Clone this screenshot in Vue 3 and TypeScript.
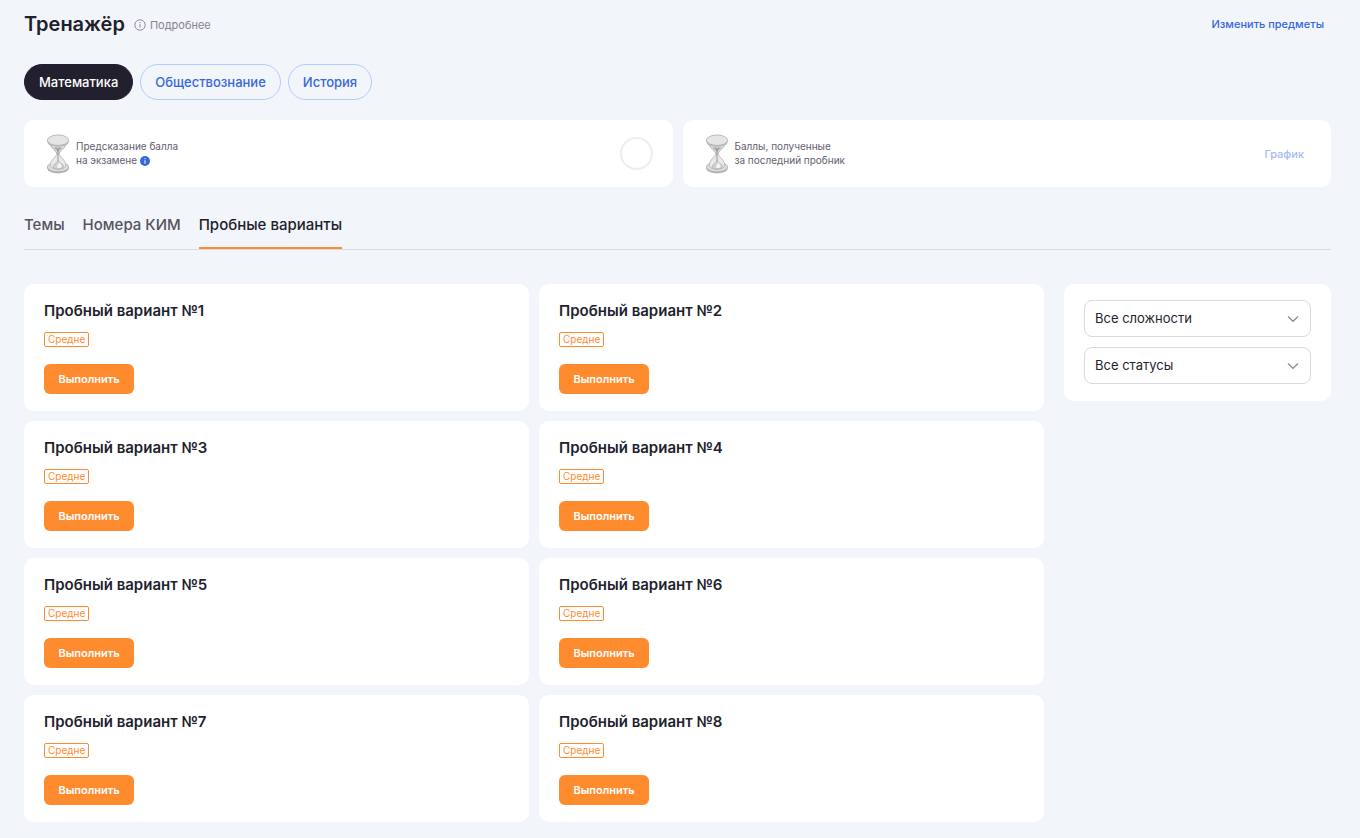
<script setup lang="ts">
import { ref } from 'vue'

interface Variant {
  id: number
  level: string
}

const subjects: string[] = ['Математика', 'Обществознание', 'История']
const activeSubject = ref<string>('Математика')

const tabs: string[] = ['Темы', 'Номера КИМ', 'Пробные варианты']
const activeTab = ref<string>('Пробные варианты')

const stats = [
  { id: 'forecast', lines: ['Предсказание балла', 'на экзамене'] },
  { id: 'last', lines: ['Баллы, полученные', 'за последний пробник'] },
]

const variants: Variant[] = Array.from({ length: 8 }, (_, i) => ({ id: i + 1, level: 'Средне' }))

const filters = [
  { id: 'level', label: 'Сложность', options: ['Все сложности', 'Легко', 'Средне', 'Сложно'] },
  { id: 'status', label: 'Статус', options: ['Все статусы', 'Выполнено', 'Не выполнено'] },
]
</script>

<template>
  <main class="page">
    <header class="top">
      <h1 class="title">Тренажёр</h1>
      <button class="more" type="button">
        <svg class="more-icon" viewBox="0 0 12 12" aria-hidden="true">
          <circle cx="6" cy="6" r="5.2" fill="none" stroke="currentColor" stroke-width="0.9" />
          <path d="M6 5.2V8.6" stroke="currentColor" stroke-width="1" />
          <circle cx="6" cy="3.6" r="0.7" fill="currentColor" />
        </svg>
        Подробнее
      </button>
      <a class="change" href="#subjects">Изменить предметы</a>
    </header>

    <nav class="subjects" aria-label="Предметы">
      <button
        v-for="s in subjects"
        :key="s"
        type="button"
        class="pill"
        :class="{ active: s === activeSubject }"
        @click="activeSubject = s"
      >
        {{ s }}
      </button>
    </nav>

    <section class="stats">
      <article v-for="stat in stats" :key="stat.id" class="stat">
        <svg class="hourglass" viewBox="0 0 24 40" aria-hidden="true">
          <ellipse cx="12" cy="34.4" rx="10.7" ry="5" fill="#b5b5b5" />
          <ellipse cx="12" cy="33" rx="10.6" ry="4.8" fill="#dedede" stroke="#b0b0b0" stroke-width="0.9" />
          <path d="M11 19.5C10.6 23 4.4 25.4 4.2 31.2C4 36.5 20 36.5 19.8 31.2C19.6 25.4 13.4 23 13 19.5Z" fill="#e9e9e9" stroke="#b4b4b4" stroke-width="0.9" />
          <path d="M12 26.5C10.8 29.8 7 30.6 7 32.5C7 36.2 18 36 17.5 32C17.2 30 13.6 29.4 12 26.5Z" fill="#d0d0d0" stroke="#a4a4a4" stroke-width="0.6" />
          <path d="M13 28.5C14.8 30.1 16.2 31.3 15.5 32.8C14.7 34.4 11.7 34.2 10.8 33.3Z" fill="#f5f5f5" />
          <path d="M4.4 10.5C5 15 10.7 16.5 11.1 20H12.9C13.3 16.5 19 15 19.6 10.5Z" fill="#e3e3e3" stroke="#adadad" stroke-width="0.9" />
          <path d="M7.3 13.4C9 15 11.3 16.2 12 19C12.7 16.2 15 15 16.7 13.4Z" fill="#a8a8a8" />
          <path d="M12 16V27" stroke="#929292" stroke-width="0.9" />
          <path d="M1.4 6V8C1.4 14.3 22.6 14.3 22.6 8V6Z" fill="#b8b8b8" />
          <ellipse cx="12" cy="6.2" rx="10.6" ry="5.2" fill="#e5e5e5" stroke="#b3b3b3" stroke-width="0.9" />
        </svg>
        <p class="stat-text">
          {{ stat.lines[0] }}<br />{{ stat.lines[1] }}
          <svg v-if="stat.id === 'forecast'" class="info" viewBox="0 0 10 10" aria-hidden="true">
            <circle cx="5" cy="5" r="5" fill="#3668dc" />
            <path d="M5 4.2V7.7" stroke="#ffffff" stroke-width="1" />
            <circle cx="5" cy="2.7" r="0.6" fill="#ffffff" />
          </svg>
        </p>
        <span v-if="stat.id === 'forecast'" class="ring"></span>
        <button v-else class="chart" type="button">График</button>
      </article>
    </section>

    <nav class="tabs" aria-label="Разделы">
      <button
        v-for="t in tabs"
        :key="t"
        type="button"
        class="tab"
        :class="{ active: t === activeTab }"
        @click="activeTab = t"
      >
        {{ t }}
      </button>
    </nav>

    <div class="content">
      <section class="grid">
        <article v-for="v in variants" :key="v.id" class="card">
          <h2 class="card-title">Пробный вариант №{{ v.id }}</h2>
          <span class="badge">{{ v.level }}</span>
          <button class="run" type="button">Выполнить</button>
        </article>
      </section>

      <aside class="filters">
        <div v-for="f in filters" :key="f.id" class="field">
          <select :id="f.id" class="select" :aria-label="f.label">
            <option v-for="o in f.options" :key="o">{{ o }}</option>
          </select>
          <svg class="chevron" viewBox="0 0 12 8" aria-hidden="true">
            <path d="M1 1.5L6 6.3L11 1.5" fill="none" stroke="#8f8d9c" stroke-width="1.3" />
          </svg>
        </div>
      </aside>
    </div>
  </main>
</template>

<style>
body {
  margin: 0;
  background: #f2f5fa;
}
</style>

<style scoped>
.page {
  box-sizing: border-box;
  padding: 8px 29px 16px 24px;
  font-family: Inter, 'Liberation Sans', sans-serif;
  color: #221f2e;
}
button,
select {
  font-family: inherit;
  margin: 0;
  cursor: pointer;
}
.top {
  display: flex;
  align-items: center;
  height: 32px;
  padding-right: 7px;
}
.title {
  margin: 0;
  font-size: 20px;
  line-height: 32px;
  font-weight: 600;
}
.more {
  display: flex;
  align-items: center;
  gap: 4px;
  margin-left: 9px;
  padding: 2px 0 0;
  border: 0;
  background: none;
  color: #85838f;
  font-size: 11px;
  line-height: 16px;
}
.more-icon {
  width: 12px;
  height: 12px;
}
.change {
  margin-left: auto;
  color: #3668dc;
  font-size: 11px;
  line-height: 16px;
  font-weight: 500;
  text-decoration: none;
}
.subjects {
  display: flex;
  gap: 7px;
  margin-top: 24px;
}
.pill {
  height: 36px;
  padding: 0 14px 1px;
  border: 1px solid #b3cdfb;
  border-radius: 18px;
  background: none;
  color: #3668dc;
  font-size: 13px;
  font-weight: 500;
}
.pill.active {
  border-color: #221f2e;
  background: #221f2e;
  color: #ffffff;
}
.stats {
  display: grid;
  grid-template-columns: 1fr 1fr;
  gap: 10px;
  margin-top: 20px;
}
.stat {
  display: flex;
  align-items: center;
  height: 67px;
  box-sizing: border-box;
  padding: 0 20px 0 22px;
  border-radius: 10px;
  background: #ffffff;
}
.hourglass {
  width: 24px;
  height: 40px;
  flex: none;
}
.stat-text {
  margin: 0 0 0 6px;
  padding-bottom: 2px;
  color: #64616f;
  font-size: 10px;
  line-height: 14px;
}
.info {
  width: 10px;
  height: 10px;
  vertical-align: -2px;
}
.ring {
  box-sizing: border-box;
  width: 33px;
  height: 33px;
  margin-left: auto;
  border: 2px solid #eeeeee;
  border-radius: 50%;
}
.chart {
  margin-left: auto;
  padding: 0 7px 0 0;
  border: 0;
  background: none;
  color: #a3bbef;
  font-size: 11px;
  font-weight: 500;
}
.tabs {
  display: flex;
  gap: 18px;
  margin-top: 20px;
  border-bottom: 1px solid #d8dbe2;
}
.tab {
  height: 42px;
  padding: 0 0 6px;
  border: 0;
  border-bottom: 2px solid transparent;
  background: none;
  color: #56535f;
  font-size: 15px;
  font-weight: 500;
}
.tab.active {
  border-color: #ff8b2f;
  color: #221f2e;
}
.content {
  display: flex;
  align-items: flex-start;
  gap: 20px;
  margin-top: 34px;
}
.grid {
  flex: 1;
  display: grid;
  grid-template-columns: 1fr 1fr;
  gap: 10px;
}
.card {
  display: flex;
  flex-direction: column;
  align-items: flex-start;
  padding: 17px 20px;
  border-radius: 10px;
  background: #ffffff;
}
.card-title {
  margin: 0;
  font-size: 15px;
  line-height: 20px;
  font-weight: 600;
}
.badge {
  margin-top: 11px;
  padding: 0 3px;
  border: 1px solid #ff8b2f;
  border-radius: 2px;
  color: #ff8b2f;
  font-size: 10px;
  line-height: 13px;
}
.run {
  height: 30px;
  min-width: 90px;
  margin-top: 17px;
  padding: 0 12px;
  border: 0;
  border-radius: 6px;
  background: #ff8b2f;
  color: #ffffff;
  font-size: 11px;
  font-weight: 600;
}
.filters {
  box-sizing: border-box;
  width: 267px;
  display: flex;
  flex-direction: column;
  gap: 10px;
  padding: 16px 20px 17px;
  border-radius: 10px;
  background: #ffffff;
}
.field {
  display: grid;
  align-items: center;
}
.select {
  grid-area: 1 / 1;
  appearance: none;
  box-sizing: border-box;
  width: 100%;
  height: 37px;
  padding: 0 32px 1px 10px;
  border: 1px solid #dad8e1;
  border-radius: 8px;
  background: #ffffff;
  color: #221f2e;
  font-size: 13px;
}
.chevron {
  grid-area: 1 / 1;
  justify-self: end;
  width: 12px;
  height: 8px;
  margin-right: 12px;
  pointer-events: none;
}
</style>
